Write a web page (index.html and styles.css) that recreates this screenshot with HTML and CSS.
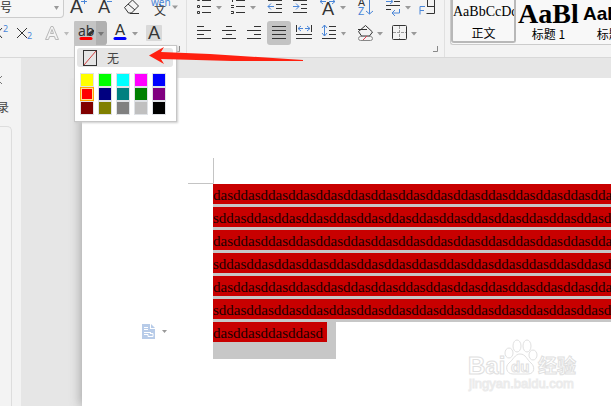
FILE: index.html
```html
<!DOCTYPE html>
<html lang="zh-CN">
<head>
<meta charset="utf-8">
<title>文字文稿</title>
<link rel="stylesheet" href="styles.css">
</head>
<body>
<header class="ribbon">
  <section class="group font-group">
    <div class="row row-top">
      <div class="size-box">
        <select class="size" aria-label="字号"><option>号</option></select>
        <svg class="size-caret" viewBox="0 0 6 4"><path class="caret" d="M0 0h5l-2.500 4z"/></svg>
      </div>
      <button class="w28" aria-label="增大字号"><svg viewBox="66 -7 28 27"><text class="letter big" x="70" y="13">A</text><path class="blue" d="M81 1.500h6M84.500 -1v5"/></svg></button>
      <button class="w24" aria-label="减小字号"><svg viewBox="94 -7 24 27"><text class="letter" x="98" y="13">A</text><path class="blue" d="M107 1.500h5"/></svg></button>
      <button class="w28" aria-label="清除格式"><svg viewBox="118 -7 28 27"><path d="M124.500 7.500l8-7.500 6 6-7 7h-3zM128 4l7 6M130 13.500h9"/></svg></button>
      <button class="w36" aria-label="拼音指南"><svg viewBox="146 -7 36 27"><text class="pinyin" x="151" y="6">wén</text><text class="hanzi" x="154" y="15">文</text><path class="caret" d="M172 5.500h6l-3 3.500z"/></svg></button>
    </div>
    <div class="row">
      <button class="w12" aria-label="上标"><svg viewBox="0 20 12 27"><path d="M-7 28l9 10M-7 38l9-10"/><text class="digit" x="3" y="32">2</text></svg></button>
      <button class="w28" aria-label="下标"><svg viewBox="12 20 28 27"><path d="M17 28l10 10M17 38l10-10"/><text class="digit" x="27" y="39">2</text></svg></button>
      <button class="w34" aria-label="文字效果"><svg viewBox="40 20 34 27"><path class="pale" d="M45.500 39.500l5.500-13h2l5.500 13h-3l-1-3h-5l-1 3zM50.500 33.500h3l-1.500-4z"/><path class="caret pale-fill" d="M64 32h5l-2.500 3.500z"/></svg></button>
      <button class="w34 pressed" aria-label="突出显示"><svg viewBox="74 20 34 27"><path class="split" d="M96 21h8q3 0 3 3v18q0 3-3 3h-8z"/><text class="mark" x="78" y="36">ab</text><path class="pen" d="M88 35l1-2 4-3 1 1-4 4z"/><path class="red-line" d="M81 38.500h10"/><path class="caret dark" d="M98 32h6l-3 4z"/></svg></button>
      <button class="w34" aria-label="字体颜色"><svg viewBox="108 20 34 27"><text class="letter short" x="115" y="35">A</text><path class="blue-line" d="M115 38.500h10"/><path class="caret" d="M132 32h6l-3 3.500z"/></svg></button>
      <button class="w24" aria-label="字符底纹"><svg viewBox="142 20 24 27"><rect class="shade" x="146" y="25" width="16" height="16" rx="1"/><text class="letter" x="148" y="39">A</text></svg></button>
    </div>
    <svg class="corner" viewBox="0 0 6 6"><path d="M1 5.500h4.500V0"/></svg>
  </section>
  <section class="group para-group">
    <div class="row row-top">
      <button class="w34" aria-label="项目符号"><svg viewBox="192 -7 34 27"><path d="M202 .500h9M202 6.500h9M202 12.500h9"/><path d="M197.500 -1.500h2v2h-2zM197.500 5.500h2v2h-2zM197.500 11.500h2v2h-2z"/><path class="caret" d="M216 6h6l-3 3.500z"/></svg></button>
      <button class="w38" aria-label="编号"><svg viewBox="226 -7 38 27"><path d="M236 .500h9M236 6.500h9M236 12.500h9M232.500 -2v4M231 5.500h3M231 7.500h3M231 11.500h2.500v2H231"/><path class="caret" d="M250 6h6l-3 3.500z"/></svg></button>
      <button class="w24" aria-label="减少缩进"><svg viewBox="264 -7 24 27"><path d="M268 .500h14M276 4.500h6M276 8.500h6M268 12.500h14"/><path class="blue" d="M274 6.500h-6M271 3.500l-3 3 3 3"/></svg></button>
      <button class="w24" aria-label="增加缩进"><svg viewBox="288 -7 24 27"><path d="M293 .500h14M301 4.500h6M301 8.500h6M293 12.500h14"/><path class="blue" d="M293 6.500h6M296 3.500l3 3-3 3"/></svg></button>
      <button class="w38" aria-label="中文版式"><svg viewBox="312 -7 38 27"><text class="letter" x="322" y="15">A</text><path class="blue" d="M320 1.500h6M323-1l-3 2.500 3 2.500M335 1.500h-6M332-1l3 2.500-3 2.500"/><path class="caret" d="M340 6h6l-3 3.500z"/></svg></button>
      <button class="w28" aria-label="排序"><svg viewBox="350 -7 28 27"><text class="sort" x="358" y="6">A</text><text class="sort blue-text" x="358" y="15">Z</text><path class="blue" d="M369.500-1v15M366 11l3.500 3 3.500-3"/></svg></button>
      <button class="w36" aria-label="显示段落标记"><svg viewBox="378 -7 36 27"><path d="M394 1.500h6M386 5.500h14M386 9.500h5"/><path class="blue" d="M386 1.500h6M390-1l3 2.500-3 2.500M399.500 9v4h-7M395 10l-3 3 3 3"/><path class="caret" d="M405 6h6l-3 3.500z"/></svg></button>
      <button class="w28" aria-label="制表位"><svg viewBox="414 -7 28 27"><path d="M421-2h13.500v15.500h-8M427.500-2v9M427 6.500h8"/><path class="blue" d="M420 14.500V6.500h5M420 10.500h4"/></svg></button>
    </div>
    <div class="row">
      <button class="w24" aria-label="左对齐"><svg viewBox="192 20 24 27"><path d="M197 26.500h7M197 30.500h14M197 34.500h7M197 38.500h14"/></svg></button>
      <button class="w26" aria-label="居中"><svg viewBox="216 20 26 27"><path d="M226 26.500h6M222 30.500h14M226 34.500h6M222 38.500h14"/></svg></button>
      <button class="w24" aria-label="右对齐"><svg viewBox="242 20 24 27"><path d="M254 26.500h7M247 30.500h14M254 34.500h7M247 38.500h14"/></svg></button>
      <button class="w26" aria-label="两端对齐" aria-pressed="true"><svg viewBox="266 20 26 27"><rect class="on" x="267" y="21" width="24" height="24" rx="3"/><path d="M272 26.500h14M272 30.500h14M272 34.500h14M272 38.500h14"/></svg></button>
      <button class="w24" aria-label="分散对齐"><svg viewBox="292 20 24 27"><path d="M296.500 25v7M311.500 25v7M296 34.500h16M296 38.500h16"/><path class="blue" d="M298 28.500h5M301 26l-3 2.500 3 2.500M310 28.500h-5M307 26l3 2.500-3 2.500"/></svg></button>
      <button class="w36" aria-label="行距"><svg viewBox="316 20 36 27"><path d="M329 26.500h7M329 30.500h7M329 34.500h7M322 38.500h14"/><path class="blue" d="M324.500 25v11M322 28l2.500-3 2.500 3M322 33l2.500 3 2.500-3"/><path class="caret" d="M341 32h5l-2.500 3.500z"/></svg></button>
      <button class="w34" aria-label="底纹颜色"><svg viewBox="352 20 34 27"><path d="M365.500 25.500l7 6.500-3 4h-8l-3-4.500zM358 29.500h9"/><rect class="grey" x="358.500" y="36.500" width="14" height="4" rx="2"/><path class="slash" d="M363 40l4-4"/><path class="caret" d="M377 32h6l-3 3.500z"/></svg></button>
      <button class="w34" aria-label="边框"><svg viewBox="386 20 34 27"><rect x="392.500" y="25.500" width="14" height="14" rx="1"/><path class="dash" d="M399.500 26v13M393 32.500h13"/><path class="caret" d="M411 32h6l-3 3.500z"/></svg></button>
    </div>
    <svg class="corner" viewBox="0 0 6 6"><path d="M1 5.500h4.500V0"/></svg>
  </section>
  <section class="styles">
    <button class="style chosen"><span class="sample normal">AaBbCcDd</span><span class="label">正文</span></button>
    <button class="style"><span class="sample heading">AaBl</span><span class="label">标题 1</span></button>
    <button class="style"><span class="sample sans">AaBb</span><span class="label">标题 2</span></button>
  </section>
</header>
<main class="body">
  <aside class="pane">
    <button class="fold" aria-label="收起"><svg viewBox="0 0 6 12"><path d="M2 2L-2 6l4 4"/></svg></button>
    <span class="pane-title">录</span>
    <div class="card"></div>
  </aside>
  <div class="workspace">
    <article class="page">
      <svg class="crop-mark" viewBox="0 0 26 26"><path d="M25.500 0v25.500H0"/></svg>
      <div class="lines">
        <p><mark>dasddasddasddasddasddasddasddasddasddasddasddasddasddasddasddasd</mark></p>
        <p><mark>sddasddasddasddasddasddasddasddasddasddasddasddasddasddasddasdda</mark></p>
        <p><mark>dasddasddasddasddasddasddasddasddasddasddasddasddasddasddasddasd</mark></p>
        <p><mark>sddasddasddasddasddasddasddasddasddasddasddasddasddasddasddasdda</mark></p>
        <p><mark>dasddasddasddasddasddasddasddasddasddasddasddasddasddasddasddasd</mark></p>
        <p><mark>sddasddasddasddasddasddasddasddasddasddasddasddasddasddasddasdda</mark></p>
        <p class="end"><mark>dasddasddasddasd</mark></p>
      </div>
      <button class="paste" aria-label="粘贴选项"><svg viewBox="0 0 26 16"><path class="sheet" d="M0 0h8v5h5v10H0zM9 0l4 4H9z"/><path class="sheet-lines" d="M2 3.500h4M2 5.500h4M2 8.500h7M2 10.500h4v2h5v-3H8"/><path class="caret" d="M20 6h5l-2.500 3z"/></svg></button>
    </article>
  </div>
</main>
<div class="menu">
  <button class="none"><svg viewBox="0 0 14 16"><rect x=".5" y=".5" width="13" height="15"/><path d="M1 15L13 1"/></svg>无</button>
  <div class="swatches">
    <button class="yellow" aria-label="黄色"></button><button class="lime" aria-label="鲜绿"></button><button class="cyan" aria-label="青绿"></button><button class="magenta" aria-label="粉红"></button><button class="azure" aria-label="蓝色"></button>
    <button class="red" aria-label="红色"></button><button class="navy" aria-label="深蓝"></button><button class="teal" aria-label="青色"></button><button class="green" aria-label="绿色"></button><button class="purple" aria-label="紫罗兰"></button>
    <button class="maroon" aria-label="深红"></button><button class="olive" aria-label="深黄"></button><button class="gray" aria-label="深灰"></button><button class="silver" aria-label="浅灰"></button><button class="black" aria-label="黑色"></button>
  </div>
</div>
<svg class="arrow" viewBox="0 0 155 18"><path d="M0 8.500L15 0l-3 5 49 2 93 6v1l-71 0-71-2 3 5z"/></svg>
<svg class="watermark" viewBox="466 338 114 58">
  <text class="brand" x="468" y="374">Bai</text>
  <path d="M520 354c-5 0-7 6-11 9s-3 11 4 11h15c7 0 7-8 3-11s-5-9-11-9z"/>
  <ellipse cx="509" cy="353" rx="4" ry="5"/><ellipse cx="517" cy="346" rx="4" ry="6"/><ellipse cx="527" cy="346" rx="4" ry="6"/><ellipse cx="533" cy="355" rx="4" ry="5"/>
  <text class="du" x="511" y="372">du</text>
  <text class="exp" x="538" y="373">经验</text>
  <text class="site" x="469" y="388">jingyan.baidu.com</text>
</svg>
</body>
</html>
```
FILE: styles.css
```css
* { box-sizing: border-box; }
body {
  margin: 0;
  height: 100vh;
  overflow: hidden;
  position: relative;
  display: flex;
  flex-direction: column;
  background: #e6e6e6;
  font: 12px/16px "Liberation Sans", "Noto Sans CJK SC", sans-serif;
  color: #222;
}
button { padding: 0; border: 0; background: none; font: inherit; color: inherit; }
svg { display: block; fill: none; stroke: #333; }

.ribbon {
  flex: none;
  height: 58px;
  display: flex;
  overflow: hidden;
  background: #f3f3f3;
  border-bottom: 1px solid #d8d8d8;
}
.group { flex: none; position: relative; border-right: 1px solid #e0e0e0; }
.font-group { width: 187px; }
.para-group { width: 258px; padding-left: 5px; }
.row { display: flex; height: 27px; }
.row-top { margin-top: -7px; }
.row button { flex: none; height: 27px; }
.row button svg { width: 100%; height: 27px; }
.w12 { width: 12px; }
.w24 { width: 24px; }
.w26 { width: 26px; }
.w28 { width: 28px; }
.w34 { width: 34px; }
.w36 { width: 36px; }
.w38 { width: 38px; }
.size-box { position: relative; width: 64px; margin-right: 2px; }
.size {
  display: block;
  width: 100%;
  height: 25px;
  padding: 3px 0 0;
  appearance: none;
  border: 1px solid #ccc;
  border-left: 0;
  border-radius: 0 0 4px 0;
  background: #f6f6f6;
  font: 12px/16px "Noto Sans CJK SC", sans-serif;
  color: #333;
}
.size-caret { position: absolute; right: 4px; top: 13px; width: 6px; height: 4px; }
.row text { stroke: none; fill: #333; }
.row .letter { font: 18px Lato, sans-serif; }
.row .big { font-size: 19px; }
.row .short { font-size: 15px; }
.row .pinyin { font: 10px "Noto Sans", sans-serif; fill: #4a86d8; }
.row .hanzi { font: 12px "Noto Sans CJK SC", sans-serif; }
.row .digit { font: 9px "Noto Sans", sans-serif; fill: #4a86d8; }
.row .mark { font: 14px "Noto Sans", sans-serif; }
.row .sort { font: 11px "Noto Sans", sans-serif; }
.row .blue-text { fill: #4a86d8; }
.row .blue { stroke: #4a86d8; }
.caret { fill: #999; stroke: none; }
.caret.dark { fill: #777; }
.pale { stroke: #b8b8b8; }
.pale-fill { fill: #bbb; }
.pen { fill: #333; }
.pressed { background: linear-gradient(#c4c4c4, #c4c4c4) no-repeat 0 1px / 32px 24px; border-radius: 3px; }
.split { fill: #b0b0b0; stroke: none; }
.red-line { stroke: #f00; stroke-width: 3; stroke-linecap: round; }
.blue-line { stroke: #00f; stroke-width: 3; stroke-linecap: round; }
.shade { fill: #d9d9d9; stroke: none; }
.on { fill: #c3c3c3; stroke: none; }
.grey { stroke: #888; }
.slash { stroke: #e04050; }
.dash { stroke: #999; stroke-dasharray: 3 1; }
.corner { position: absolute; right: 6px; bottom: 5px; width: 6px; height: 6px; }
.corner path { stroke: #888; }

.styles {
  flex: 1;
  min-width: 0;
  height: 45px;
  margin-left: 5px;
  display: flex;
  overflow: hidden;
  border-bottom: 1px solid #ccc;
  border-left: 1px solid #ccc;
  border-radius: 0 0 0 3px;
  background: #f8f8f8;
}
.style {
  flex: none;
  width: 65px;
  height: 43px;
  overflow: hidden;
  display: flex;
  flex-direction: column;
  align-items: center;
  color: #000;
  white-space: nowrap;
}
.chosen { border: 2px solid #b8b8b8; border-top: 0; border-radius: 0 0 3px 3px; }
.sample { align-self: stretch; height: 26px; overflow: hidden; text-align: left; }
.normal { font: 14px/24px "Liberation Serif", serif; }
.heading { font: bold 28px/28px "Liberation Serif", serif; padding-left: 2px; }
.sans { font: bold 19px/28px "Liberation Sans", sans-serif; padding-left: 2px; }
.label { font: 12px/16px "Noto Sans CJK SC", sans-serif; }

.body { flex: 1; min-height: 0; display: flex; }
.pane { flex: none; display: flex; flex-direction: column; align-items: flex-start; width: 21px; background: #f3f3f3; padding-top: 16px; }
.fold svg { width: 6px; height: 12px; stroke: #777; }
.pane-title {
  display: flex;
  justify-content: flex-end;
  width: 9px;
  margin-top: 14px;
  overflow: hidden;
  color: #444;
}
.card { flex: 1; width: 12px; margin-top: 10px; border: 1px solid #ddd; border-width: 1px 1px 0 0; border-radius: 0 5px 0 0; }
.workspace { flex: 1; min-width: 0; padding: 20px 0 0 61px; }
.page {
  position: relative;
  height: 100%;
  padding: 106px 0 0 131px;
  background: #fff;
  box-shadow: -2px 0 10px #aaa;
  clip-path: inset(0 0 0 -14px);
}
.crop-mark { position: absolute; left: 106px; top: 80px; width: 26px; height: 26px; stroke: #c4c4c4; }
.lines { overflow: hidden; font: 15px/23px "Liberation Serif", serif; color: #200000; white-space: nowrap; }
.lines p { margin: 0; height: 23px; background: #c7c7c7; }
.lines mark { display: inline-block; height: 20px; vertical-align: top; background: #c80000; color: inherit; }
.lines .end { width: 123px; height: 37px; }
.end mark { padding-right: 4px; }
.paste { position: absolute; left: 60px; top: 246px; }
.paste svg { width: 26px; height: 16px; }
.sheet { fill: #b7cbe8; stroke: none; }
.sheet-lines { stroke: #fff; }

.menu {
  position: absolute;
  left: 74px;
  top: 45px;
  width: 103px;
  padding: 2px;
  border: 1px solid #c6c6c6;
  background: #fff;
  box-shadow: 1px 1px 2px #ccc;
}
.none {
  display: flex;
  align-items: center;
  gap: 10px;
  width: 96px;
  height: 19px;
  padding-left: 6px;
  border-radius: 3px;
  background: #e5e5e5;
  font: 12px/18px "Noto Sans CJK SC", sans-serif;
  color: #444;
}
.none svg { width: 14px; height: 16px; }
.none path { stroke: #cf4040; }
.swatches { display: grid; grid-template-columns: repeat(5, 14px); column-gap: 4px; padding: 6px 3px 4px; }
.swatches button { height: 14px; border: 1px solid #dfe2e6; }
.yellow { background: #ff0; }
.lime { background: #0f0; }
.cyan { background: #0ff; }
.magenta { background: #f0f; }
.azure { background: #00f; }
.swatches .red { background: #f00; border-color: #ffa500; box-shadow: inset 0 0 0 1px #ffdf90; }
.navy { background: #000080; }
.teal { background: #008080; }
.green { background: #008000; }
.purple { background: #800080; }
.maroon { background: #800000; }
.olive { background: #808000; }
.gray { background: #808080; }
.silver { background: #c0c0c0; }
.black { background: #000; }

.arrow { position: absolute; left: 149px; top: 47px; width: 155px; height: 18px; fill: #ff2010; stroke: none; }
.watermark { position: absolute; right: 31px; bottom: 10px; width: 114px; height: 58px; fill: #fff; stroke: #e0e0e0; }
.brand { font: bold 24px "Liberation Sans", sans-serif; }
.du { font: bold 15px "Liberation Sans", sans-serif; }
.exp { font: bold 19px "Noto Sans CJK SC", sans-serif; }
.site { font: 13px "Liberation Sans", sans-serif; stroke: #ebebeb; }
```
